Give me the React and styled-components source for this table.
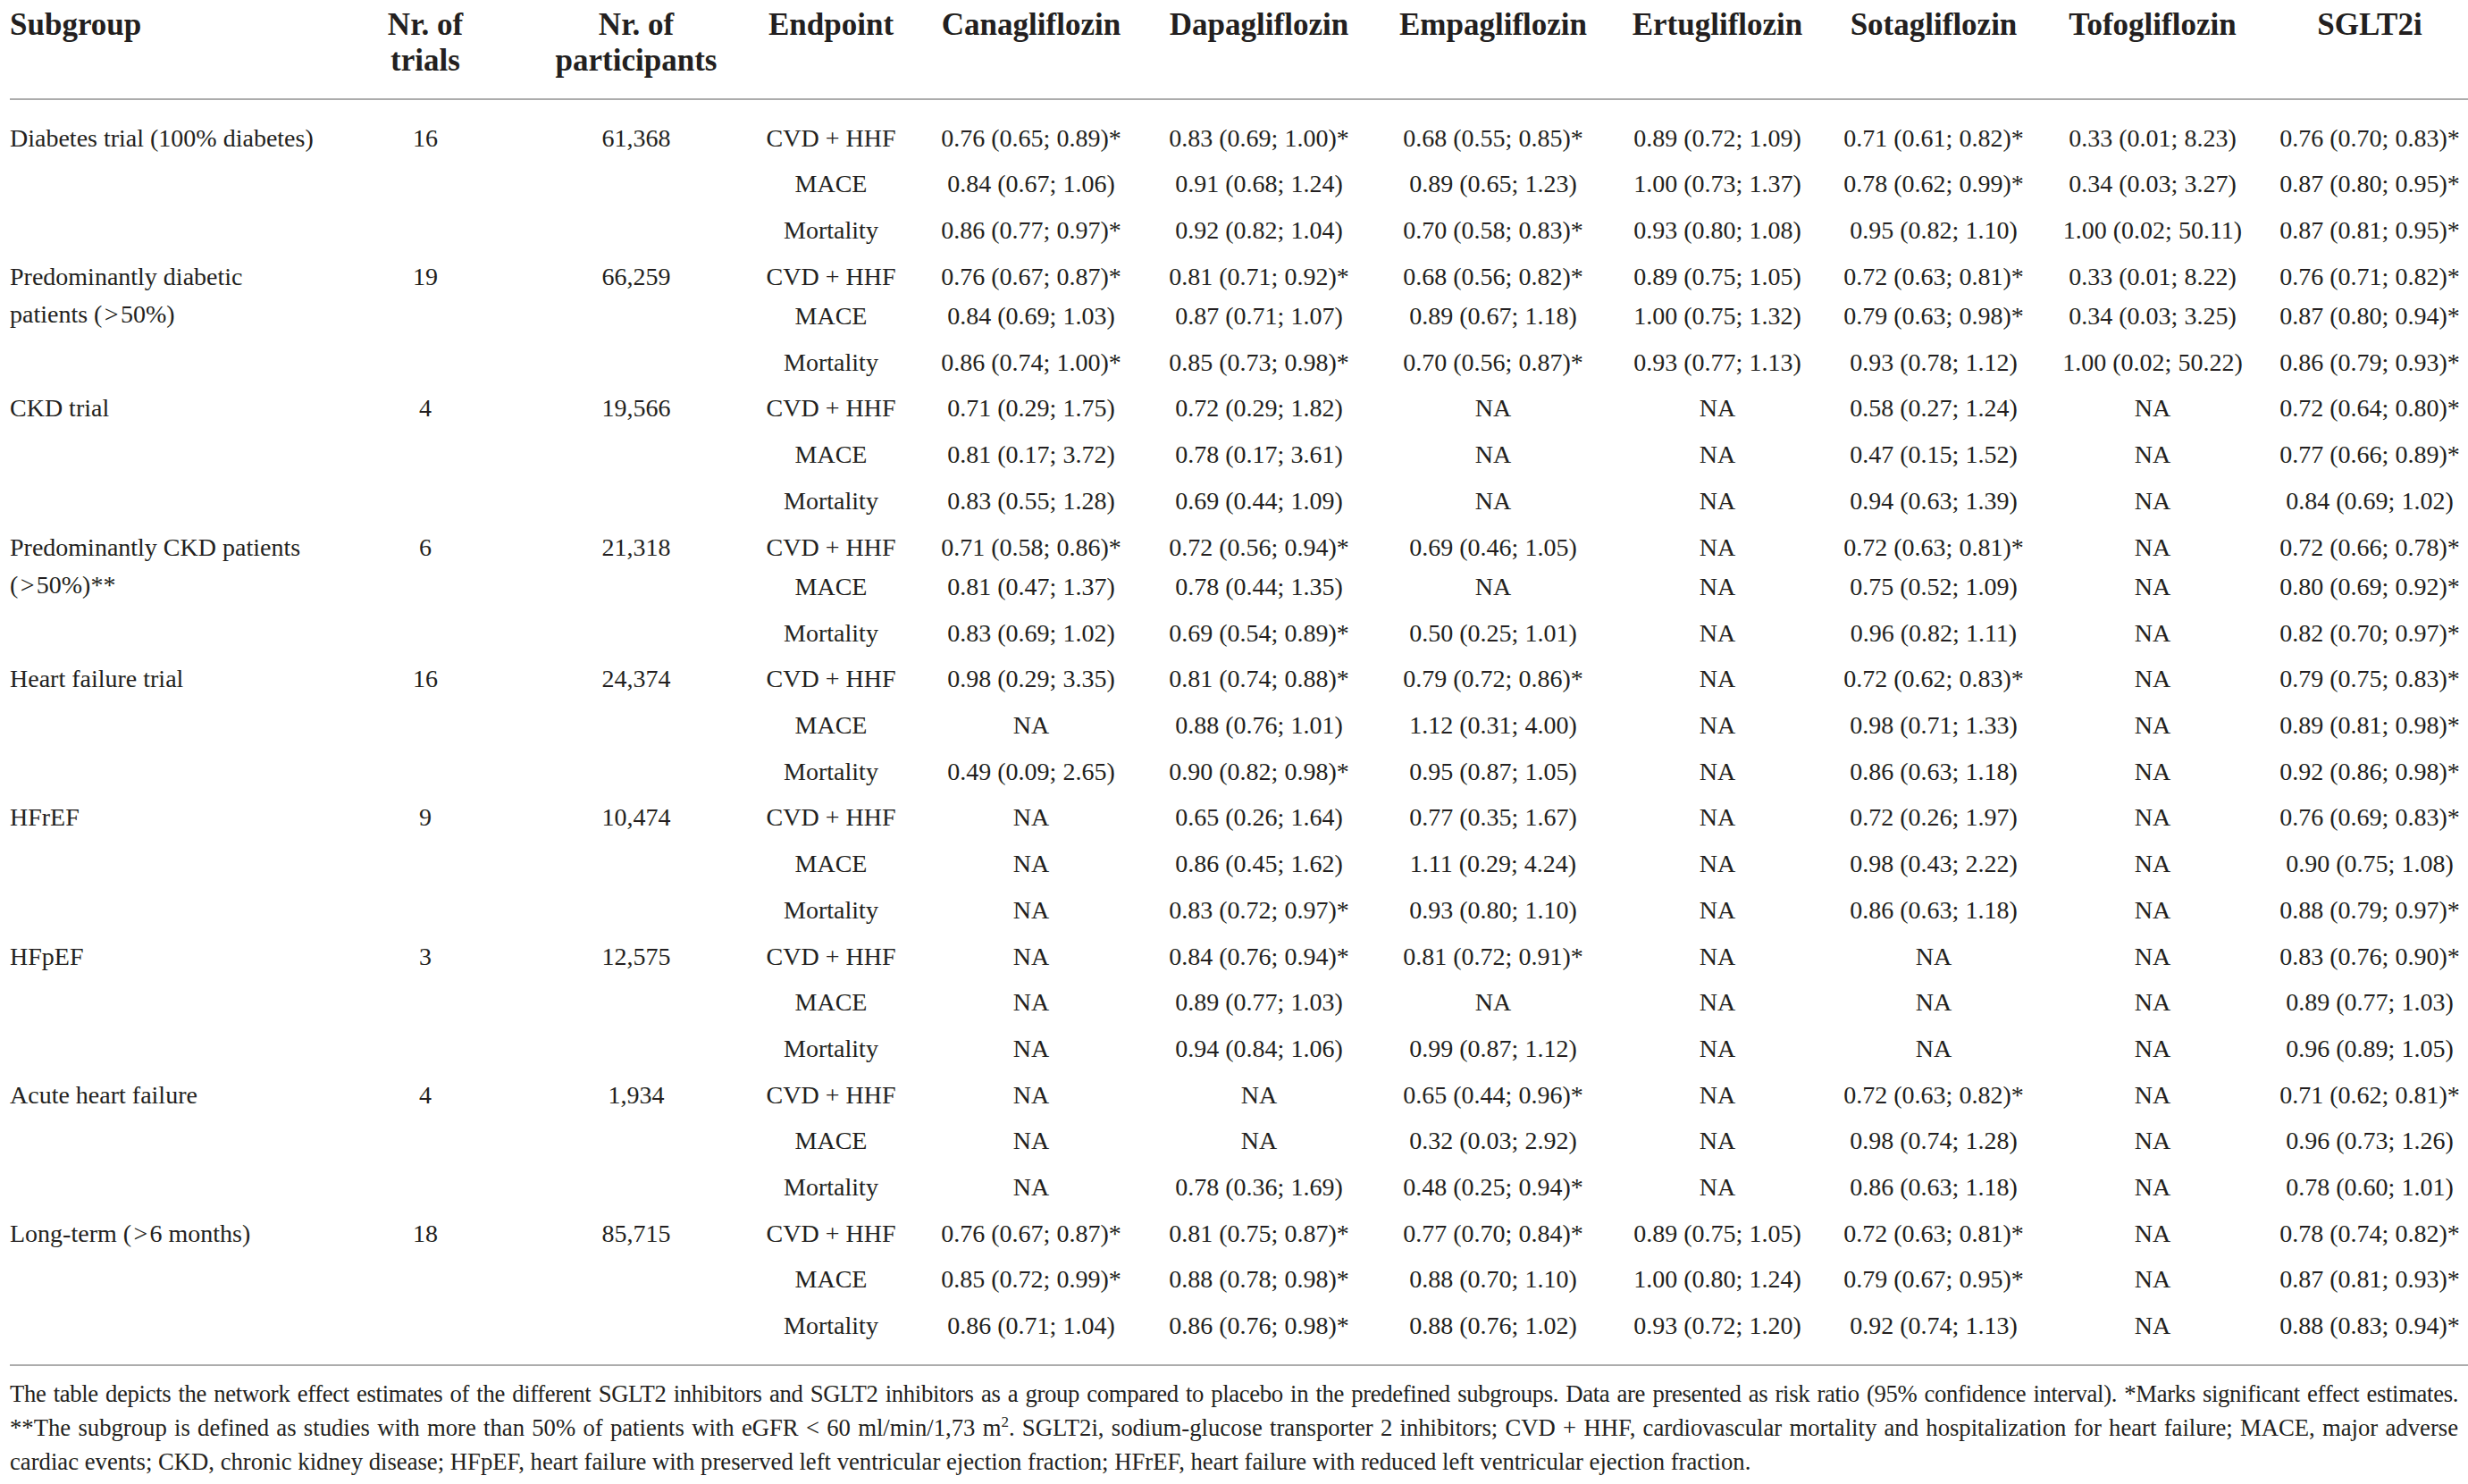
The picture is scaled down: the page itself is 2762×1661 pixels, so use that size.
import React from "react";
import styled, { createGlobalStyle } from "styled-components";

const GlobalStyle = createGlobalStyle`
  html, body {
    margin: 0;
    padding: 0;
    background: #ffffff;
    overflow: hidden;
  }
  body {
    font-family: "Liberation Serif", "Times New Roman", serif;
    color: #231f20;
  }
`;

const COLS = "346px 238px 234px 202px 246px 264px 260px 242px 242px 248px 238px";
const ROW = 51.7;
const SHORT_ROW = 44.5;

const Page = styled.div`
  width: 2760px;
  padding-left: 11px;
`;

const HeaderRow = styled.div`
  display: grid;
  grid-template-columns: ${COLS};
  padding: 8px 0 22px;
  border-bottom: 2px solid #acacac;
  font-size: 35px;
  line-height: 40px;
  font-weight: 700;
`;

const HeadCell = styled.div`
  text-align: ${(p) => (p.$left ? "left" : "center")};
  white-space: nowrap;
`;

const Body = styled.div`
  padding: 16.5px 0 17px;
  border-bottom: 2px solid #acacac;
`;

const Group = styled.div`
  display: grid;
  grid-template-columns: ${COLS};
  grid-template-rows: ${(p) => p.$first}px ${ROW}px ${ROW}px;
  font-size: 28px;
`;

const Label = styled.div`
  grid-row: 1 / span 3;
  align-self: start;
  padding-top: 5px;
  line-height: 42px;
  white-space: nowrap;
`;

const Cell = styled.div`
  align-self: start;
  padding-top: 10px;
  line-height: 32px;
  text-align: center;
  white-space: nowrap;
`;

const EndpointCell = styled(Cell)`
  grid-column: 4;
`;

const Notes = styled.div`
  width: 2740px;
  margin-top: 12px;
  font-size: 26.7px;
  line-height: 38px;
`;

const NoteLine = styled.div`
  text-align: justify;
  text-align-last: ${(p) => (p.$justify ? "justify" : "left")};
  letter-spacing: ${(p) => (p.$tight ? "-0.35px" : "normal")};
  white-space: nowrap;
`;

const Sup = styled.sup`
  font-size: 17px;
  line-height: 0;
`;

const DRUGS = [
  "Canagliflozin",
  "Dapagliflozin",
  "Empagliflozin",
  "Ertugliflozin",
  "Sotagliflozin",
  "Tofogliflozin",
  "SGLT2i",
];

const ENDPOINTS = ["CVD + HHF", "MACE", "Mortality"];

const groups = [
  {
    label: ["Diabetes trial (100% diabetes)"],
    trials: "16",
    n: "61,368",
    rows: [
      ["0.76 (0.65; 0.89)*", "0.83 (0.69; 1.00)*", "0.68 (0.55; 0.85)*", "0.89 (0.72; 1.09)", "0.71 (0.61; 0.82)*", "0.33 (0.01; 8.23)", "0.76 (0.70; 0.83)*"],
      ["0.84 (0.67; 1.06)", "0.91 (0.68; 1.24)", "0.89 (0.65; 1.23)", "1.00 (0.73; 1.37)", "0.78 (0.62; 0.99)*", "0.34 (0.03; 3.27)", "0.87 (0.80; 0.95)*"],
      ["0.86 (0.77; 0.97)*", "0.92 (0.82; 1.04)", "0.70 (0.58; 0.83)*", "0.93 (0.80; 1.08)", "0.95 (0.82; 1.10)", "1.00 (0.02; 50.11)", "0.87 (0.81; 0.95)*"],
    ],
  },
  {
    label: ["Predominantly diabetic", "patients (\u200a>\u200a50%)"],
    trials: "19",
    n: "66,259",
    rows: [
      ["0.76 (0.67; 0.87)*", "0.81 (0.71; 0.92)*", "0.68 (0.56; 0.82)*", "0.89 (0.75; 1.05)", "0.72 (0.63; 0.81)*", "0.33 (0.01; 8.22)", "0.76 (0.71; 0.82)*"],
      ["0.84 (0.69; 1.03)", "0.87 (0.71; 1.07)", "0.89 (0.67; 1.18)", "1.00 (0.75; 1.32)", "0.79 (0.63; 0.98)*", "0.34 (0.03; 3.25)", "0.87 (0.80; 0.94)*"],
      ["0.86 (0.74; 1.00)*", "0.85 (0.73; 0.98)*", "0.70 (0.56; 0.87)*", "0.93 (0.77; 1.13)", "0.93 (0.78; 1.12)", "1.00 (0.02; 50.22)", "0.86 (0.79; 0.93)*"],
    ],
  },
  {
    label: ["CKD trial"],
    trials: "4",
    n: "19,566",
    rows: [
      ["0.71 (0.29; 1.75)", "0.72 (0.29; 1.82)", "NA", "NA", "0.58 (0.27; 1.24)", "NA", "0.72 (0.64; 0.80)*"],
      ["0.81 (0.17; 3.72)", "0.78 (0.17; 3.61)", "NA", "NA", "0.47 (0.15; 1.52)", "NA", "0.77 (0.66; 0.89)*"],
      ["0.83 (0.55; 1.28)", "0.69 (0.44; 1.09)", "NA", "NA", "0.94 (0.63; 1.39)", "NA", "0.84 (0.69; 1.02)"],
    ],
  },
  {
    label: ["Predominantly CKD patients", "(\u200a>\u200a50%)**"],
    trials: "6",
    n: "21,318",
    rows: [
      ["0.71 (0.58; 0.86)*", "0.72 (0.56; 0.94)*", "0.69 (0.46; 1.05)", "NA", "0.72 (0.63; 0.81)*", "NA", "0.72 (0.66; 0.78)*"],
      ["0.81 (0.47; 1.37)", "0.78 (0.44; 1.35)", "NA", "NA", "0.75 (0.52; 1.09)", "NA", "0.80 (0.69; 0.92)*"],
      ["0.83 (0.69; 1.02)", "0.69 (0.54; 0.89)*", "0.50 (0.25; 1.01)", "NA", "0.96 (0.82; 1.11)", "NA", "0.82 (0.70; 0.97)*"],
    ],
  },
  {
    label: ["Heart failure trial"],
    trials: "16",
    n: "24,374",
    rows: [
      ["0.98 (0.29; 3.35)", "0.81 (0.74; 0.88)*", "0.79 (0.72; 0.86)*", "NA", "0.72 (0.62; 0.83)*", "NA", "0.79 (0.75; 0.83)*"],
      ["NA", "0.88 (0.76; 1.01)", "1.12 (0.31; 4.00)", "NA", "0.98 (0.71; 1.33)", "NA", "0.89 (0.81; 0.98)*"],
      ["0.49 (0.09; 2.65)", "0.90 (0.82; 0.98)*", "0.95 (0.87; 1.05)", "NA", "0.86 (0.63; 1.18)", "NA", "0.92 (0.86; 0.98)*"],
    ],
  },
  {
    label: ["HFrEF"],
    trials: "9",
    n: "10,474",
    rows: [
      ["NA", "0.65 (0.26; 1.64)", "0.77 (0.35; 1.67)", "NA", "0.72 (0.26; 1.97)", "NA", "0.76 (0.69; 0.83)*"],
      ["NA", "0.86 (0.45; 1.62)", "1.11 (0.29; 4.24)", "NA", "0.98 (0.43; 2.22)", "NA", "0.90 (0.75; 1.08)"],
      ["NA", "0.83 (0.72; 0.97)*", "0.93 (0.80; 1.10)", "NA", "0.86 (0.63; 1.18)", "NA", "0.88 (0.79; 0.97)*"],
    ],
  },
  {
    label: ["HFpEF"],
    trials: "3",
    n: "12,575",
    rows: [
      ["NA", "0.84 (0.76; 0.94)*", "0.81 (0.72; 0.91)*", "NA", "NA", "NA", "0.83 (0.76; 0.90)*"],
      ["NA", "0.89 (0.77; 1.03)", "NA", "NA", "NA", "NA", "0.89 (0.77; 1.03)"],
      ["NA", "0.94 (0.84; 1.06)", "0.99 (0.87; 1.12)", "NA", "NA", "NA", "0.96 (0.89; 1.05)"],
    ],
  },
  {
    label: ["Acute heart failure"],
    trials: "4",
    n: "1,934",
    rows: [
      ["NA", "NA", "0.65 (0.44; 0.96)*", "NA", "0.72 (0.63; 0.82)*", "NA", "0.71 (0.62; 0.81)*"],
      ["NA", "NA", "0.32 (0.03; 2.92)", "NA", "0.98 (0.74; 1.28)", "NA", "0.96 (0.73; 1.26)"],
      ["NA", "0.78 (0.36; 1.69)", "0.48 (0.25; 0.94)*", "NA", "0.86 (0.63; 1.18)", "NA", "0.78 (0.60; 1.01)"],
    ],
  },
  {
    label: ["Long-term (\u200a>\u200a6 months)"],
    trials: "18",
    n: "85,715",
    rows: [
      ["0.76 (0.67; 0.87)*", "0.81 (0.75; 0.87)*", "0.77 (0.70; 0.84)*", "0.89 (0.75; 1.05)", "0.72 (0.63; 0.81)*", "NA", "0.78 (0.74; 0.82)*"],
      ["0.85 (0.72; 0.99)*", "0.88 (0.78; 0.98)*", "0.88 (0.70; 1.10)", "1.00 (0.80; 1.24)", "0.79 (0.67; 0.95)*", "NA", "0.87 (0.81; 0.93)*"],
      ["0.86 (0.71; 1.04)", "0.86 (0.76; 0.98)*", "0.88 (0.76; 1.02)", "0.93 (0.72; 1.20)", "0.92 (0.74; 1.13)", "NA", "0.88 (0.83; 0.94)*"],
    ],
  },
];

function SubgroupBlock({ group }) {
  const first = group.label.length > 1 ? SHORT_ROW : ROW;
  return (
    <Group $first={first}>
      <Label>
        {group.label.map((line, i) => (
          <div key={i}>{line}</div>
        ))}
      </Label>
      <Cell>{group.trials}</Cell>
      <Cell>{group.n}</Cell>
      {group.rows.map((row, r) => (
        <React.Fragment key={r}>
          <EndpointCell>{ENDPOINTS[r]}</EndpointCell>
          {row.map((value, c) => (
            <Cell key={c}>{value}</Cell>
          ))}
        </React.Fragment>
      ))}
    </Group>
  );
}

export default function App() {
  return (
    <>
      <GlobalStyle />
      <Page>
        <HeaderRow>
          <HeadCell $left>Subgroup</HeadCell>
          <HeadCell>
            Nr. of
            <br />
            trials
          </HeadCell>
          <HeadCell>
            Nr. of
            <br />
            participants
          </HeadCell>
          <HeadCell>Endpoint</HeadCell>
          {DRUGS.map((d) => (
            <HeadCell key={d}>{d}</HeadCell>
          ))}
        </HeaderRow>

        <Body>
          {groups.map((g) => (
            <SubgroupBlock key={g.label.join(" ")} group={g} />
          ))}
        </Body>

        <Notes>
          <NoteLine $justify $tight>
            The table depicts the network effect estimates of the different SGLT2 inhibitors and SGLT2 inhibitors as a group compared to placebo in the predefined subgroups. Data are presented as risk ratio (95% confidence interval). *Marks significant effect estimates.
          </NoteLine>
          <NoteLine $justify>
            **The subgroup is defined as studies with more than 50% of patients with eGFR &lt; 60 ml/min/1,73 m<Sup>2</Sup>. SGLT2i, sodium-glucose transporter 2 inhibitors; CVD + HHF, cardiovascular mortality and hospitalization for heart failure; MACE, major adverse
          </NoteLine>
          <NoteLine>
            cardiac events; CKD, chronic kidney disease; HFpEF, heart failure with preserved left ventricular ejection fraction; HFrEF, heart failure with reduced left ventricular ejection fraction.
          </NoteLine>
        </Notes>
      </Page>
    </>
  );
}
